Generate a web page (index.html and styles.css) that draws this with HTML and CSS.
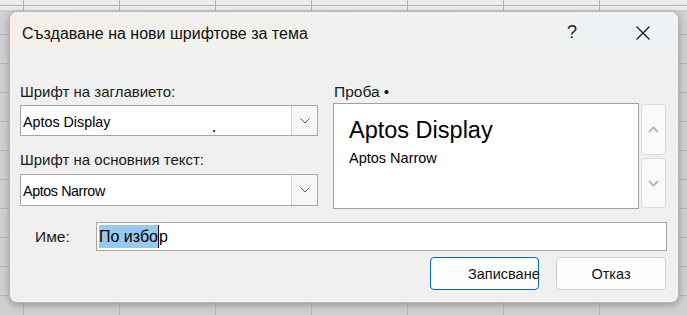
FILE: index.html
```html
<!DOCTYPE html>
<html lang="bg">
<head>
<meta charset="utf-8">
<title>Създаване на нови шрифтове за тема</title>
<link rel="stylesheet" href="styles.css">
</head>
<body>
<div class="page">
  <div class="dialog">
    <div class="titlebar">
      <span class="title">Създаване на нови шрифтове за тема</span>
      <div class="title-btns">
        <span class="tb help">?</span>
        <span class="tb close">
          <svg width="16" height="16" viewBox="0 0 16 16"><path d="M1.5 1.5 L14.5 14.5 M14.5 1.5 L1.5 14.5" stroke="#1b1b1b" stroke-width="1.3" fill="none"/></svg>
        </span>
      </div>
    </div>
    <div class="body">
      <div class="cols">
        <div class="left">
          <div class="lbl">Шрифт на заглавието:</div>
          <div class="combo">
            <span class="combo-text">Aptos Display</span>
            <span class="combo-btn"><svg width="10" height="6" viewBox="0 0 10 6"><path d="M0.5 0.5 L5 5 L9.5 0.5" stroke="#5a5a5a" stroke-width="1" fill="none"/></svg></span>
            <i class="dot"></i>
          </div>
          <div class="lbl lbl2">Шрифт на основния текст:</div>
          <div class="combo combo2">
            <span class="combo-text narrow">Aptos Narrow</span>
            <span class="combo-btn"><svg width="10" height="6" viewBox="0 0 10 6"><path d="M0.5 0.5 L5 5 L9.5 0.5" stroke="#5a5a5a" stroke-width="1" fill="none"/></svg></span>
          </div>
        </div>
        <div class="right">
          <div class="lbl lbl-sample">Проба •</div>
          <div class="sample-row">
            <div class="sample">
              <div class="s-head">Aptos Display</div>
              <div class="s-body">Aptos Narrow</div>
            </div>
            <div class="spin">
              <div class="spin-btn up"><svg width="11" height="7" viewBox="0 0 11 7"><path d="M1 6 L5.5 1.5 L10 6" stroke="#b8b8b8" stroke-width="2" fill="none"/></svg></div>
              <div class="spin-btn down"><svg width="11" height="7" viewBox="0 0 11 7"><path d="M1 1 L5.5 5.5 L10 1" stroke="#b8b8b8" stroke-width="2" fill="none"/></svg></div>
            </div>
          </div>
        </div>
      </div>
      <div class="name-row">
        <span class="name-lbl">Име:</span>
        <div class="name-input"><span class="sel">По избо</span><i class="caret"></i>р</div>
      </div>
      <div class="actions">
        <span class="btn primary"><span class="btn-text">Записване</span></span>
        <span class="btn cancel">Отказ</span>
      </div>
    </div>
  </div>
</div>
</body>
</html>
```
FILE: styles.css
```css
html, body {
  margin: 0;
  padding: 0;
}
body {
  width: 687px;
  height: 315px;
  overflow: hidden;
  font-family: "Liberation Sans", Arial, sans-serif;
  color: #1a1a1a;
  background-color: #cfcfcf;
  background-image:
    linear-gradient(90deg, #b6b6b6 1px, transparent 1px),
    linear-gradient(#b6b6b6 1px, transparent 1px),
    linear-gradient(#ececec, #ececec);
  background-size: 96px 29px, 96px 29px, 100% 10px;
  background-position: 23px 5px, 0 5px, 0 0;
  background-repeat: repeat, repeat, no-repeat;
}
.page {
  padding: 11px 8px 12px 9px;
  box-sizing: border-box;
  width: 687px;
  height: 315px;
}
.dialog {
  height: 292px;
  box-sizing: border-box;
  background: #f0f0f0;
  border: 1px solid #b8b8b8;
  border-radius: 8px;
  box-shadow: 0 2px 6px rgba(0,0,0,0.28);
  display: flex;
  flex-direction: column;
  overflow: hidden;
}
.titlebar {
  height: 41px;
  flex: none;
  display: flex;
  align-items: center;
  padding-left: 12px;
  background: linear-gradient(90deg, #f4f0e9 0%, #f1f1ef 50%, #eef2f5 100%);
}
.title {
  font-size: 16px;
  color: #111;
  flex: 1;
  padding-top: 2px;
}
.title-btns {
  display: flex;
  margin-right: 12px;
}
.tb {
  width: 46px;
  height: 40px;
  display: flex;
  align-items: center;
  justify-content: center;
}
.help {
  font-size: 18px;
  color: #222;
  margin-right: 25px;
}
.body {
  flex: 1;
  padding: 30px 12px 0 10px;
  display: flex;
  flex-direction: column;
}
.cols {
  display: flex;
  gap: 15px;
}
.left {
  width: 300px;
  display: flex;
  flex-direction: column;
}
.lbl {
  font-family: "Liberation Sans Narrow", "Liberation Sans", Arial, sans-serif;
  font-size: 15px;
  line-height: 17px;
  height: 17px;
  color: #1a1a1a;
  white-space: nowrap;
}
.lbl-sample {
  font-size: 15.5px;
  padding-left: 1px;
}
.lbl2 {
  margin-top: 15px;
}
.combo {
  position: relative;
  margin-top: 5px;
  height: 31px;
  box-sizing: border-box;
  border: 1px solid #a6a6a6;
  background: #fff;
  display: flex;
  align-items: center;
}
.combo2 {
  margin-top: 6px;
  height: 32px;
}
.combo-text {
  flex: 1;
  padding-left: 2px;
  font-size: 14.3px;
  color: #000;
  padding-top: 2px;
}
.combo-text.narrow {
  letter-spacing: -0.4px;
}
.combo-btn {
  width: 26px;
  height: 100%;
  box-sizing: border-box;
  border-left: 1px solid #d4d4d4;
  background: #f7f7f7;
  display: flex;
  align-items: center;
  justify-content: center;
}
.dot {
  position: absolute;
  left: 192px;
  top: 24px;
  width: 2px;
  height: 2px;
  background: #e01010;
}
.right {
  flex: 1;
  display: flex;
  flex-direction: column;
}
.sample-row {
  margin-top: 3px;
  display: flex;
  gap: 2px;
}
.sample {
  width: 306px;
  height: 106px;
  box-sizing: border-box;
  background: #fff;
  border: 1px solid #a0a0a0;
  padding: 13px 0 0 15px;
}
.s-head {
  font-size: 23.5px;
  line-height: 27px;
  color: #000;
}
.s-body {
  margin-top: 6px;
  font-size: 14.5px;
  line-height: 17px;
  color: #000;
}
.spin {
  width: 25px;
  display: flex;
  flex-direction: column;
  gap: 3px;
  padding-top: 1px;
}
.spin-btn {
  box-sizing: border-box;
  background: #fafafa;
  border: 1px solid #dcdcdc;
  border-radius: 4px;
  display: flex;
  align-items: center;
  justify-content: center;
}
.spin-btn.up {
  height: 51px;
}
.spin-btn.down {
  height: 50px;
}
.name-row {
  margin-top: 13px;
  display: flex;
  align-items: center;
}
.name-lbl {
  width: 61px;
  margin-left: 15px;
  font-family: "Liberation Sans Narrow", "Liberation Sans", Arial, sans-serif;
  font-size: 15.5px;
  color: #1a1a1a;
}
.name-input {
  flex: 1;
  margin-right: -1px;
  height: 29px;
  box-sizing: border-box;
  background: #fff;
  border: 1px solid #a6a6a6;
  display: flex;
  align-items: center;
  padding-left: 2px;
  font-size: 16px;
  color: #000;
}
.sel {
  background: #99c9ef;
  line-height: 23px;
  white-space: pre;
}
.caret {
  display: inline-block;
  width: 1px;
  height: 23px;
  background: #000;
}
.actions {
  margin-top: 6px;
  display: flex;
  justify-content: flex-end;
  gap: 17px;
}
.btn {
  height: 33px;
  box-sizing: border-box;
  background: #fdfdfd;
  border: 1px solid #d0d0d0;
  border-radius: 4px;
  font-size: 14.5px;
  color: #111;
  display: flex;
  align-items: center;
  justify-content: center;
}
.primary {
  width: 109px;
  border: 1px solid #0067c0;
  justify-content: flex-start;
  padding-left: 37px;
  overflow: visible;
}
.btn-text {
  white-space: nowrap;
}
.cancel {
  width: 110px;
}
```
